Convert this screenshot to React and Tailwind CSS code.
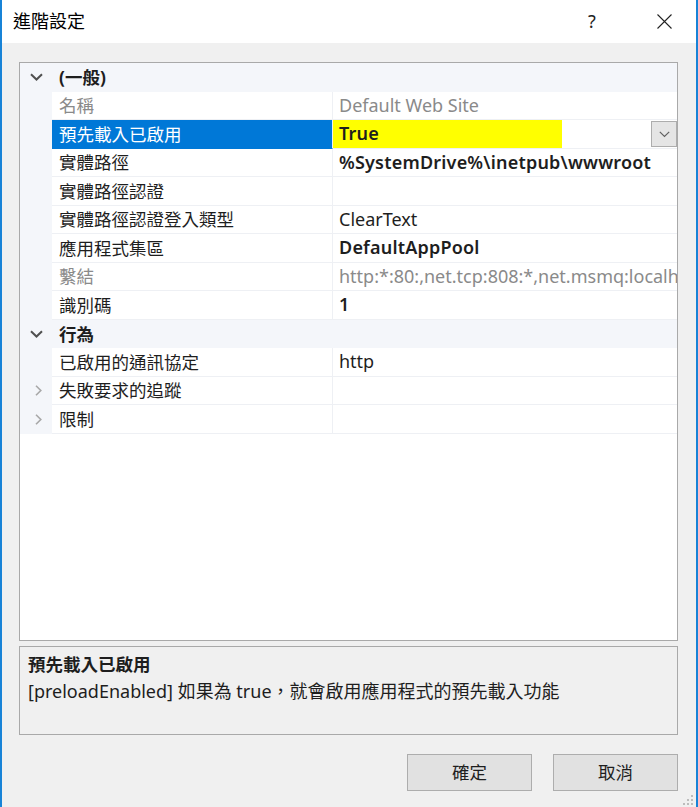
import React from "react";

const rows = [
  { cat: "(一般)" },
  { name: "名稱", value: "Default Web Site", ro: true },
  { name: "預先載入已啟用", value: "True", bold: true, selected: true, mark: true, drop: true },
  { name: "實體路徑", value: "%SystemDrive%\\inetpub\\wwwroot", bold: true },
  { name: "實體路徑認證", value: "" },
  { name: "實體路徑認證登入類型", value: "ClearText" },
  { name: "應用程式集區", value: "DefaultAppPool", bold: true },
  { name: "繫結", value: "http:*:80:,net.tcp:808:*,net.msmq:localhost,msmq.formatname:localhost", ro: true },
  { name: "識別碼", value: "1", bold: true },
  { cat: "行為" },
  { name: "已啟用的通訊協定", value: "http" },
  { name: "失敗要求的追蹤", value: "", more: true },
  { name: "限制", value: "", more: true },
];

function ChevronDown({ className }) {
  return (
    <svg width="13" height="8" viewBox="0 0 13 8" className={className}>
      <path d="M1 1.2 L6.5 6.5 L12 1.2" fill="none" stroke="currentColor" strokeWidth="2" />
    </svg>
  );
}

function ChevronRight() {
  return (
    <svg width="7" height="11" viewBox="0 0 7 11" className="text-[#a8a8a8]">
      <path d="M1 0.8 L5.8 5.5 L1 10.2" fill="none" stroke="currentColor" strokeWidth="1.6" />
    </svg>
  );
}

function GridRow({ row }) {
  if (row.cat) {
    return (
      <div className="h-[28.5px] flex items-center bg-[#f4f6fa] shrink-0">
        <div className="w-[32px] flex justify-center pl-[1px] text-[#505050]">
          <ChevronDown />
        </div>
        <div className="pl-[7px] font-bold text-[#1e1e1e]">{row.cat}</div>
      </div>
    );
  }
  return (
    <div className="h-[28.5px] flex shrink-0 relative">
      <div className="w-[32px] bg-[#f4f6fa] flex items-center justify-center pl-[4px]">
        {row.more && <ChevronRight />}
      </div>
      <div
        className={
          "w-[281px] flex items-center pl-[7px] border-r border-b border-[#eef0f4] whitespace-nowrap " +
          (row.selected ? "bg-[#0078d7] text-white border-b-[#0078d7]" : row.ro ? "text-[#8a8a8a]" : "text-[#1e1e1e]")
        }
      >
        {row.name}
      </div>
      <div className="flex-1 relative flex items-center pl-[6px] border-b border-[#eef0f4] overflow-hidden whitespace-nowrap text-[18px]">
        {row.mark && <div className="absolute left-[-1px] top-[-5px] w-[230px] h-[36px] bg-[#ffff00]" />}
        <span
          className={
            "relative " +
            (row.bold ? "font-semibold text-[#1e1e1e] tracking-[0.2px]" : row.ro ? "text-[#8a8a8a]" : "text-[#1e1e1e]")
          }
        >
          {row.value}
        </span>
        {row.drop && (
          <div className="absolute right-0 top-[1px] w-[26px] h-[26px] bg-[#e5e5e5] border border-[#adadad] flex items-center justify-center text-[#606060]">
            <svg width="11" height="7" viewBox="0 0 11 7">
              <path d="M0.8 0.8 L5.5 5.5 L10.2 0.8" fill="none" stroke="currentColor" strokeWidth="1.2" />
            </svg>
          </div>
        )}
      </div>
    </div>
  );
}

export default function App() {
  return (
    <div className="w-[698px] h-[807px] flex flex-col bg-[#f0f0f0] border-l-2 border-r-2 border-[#1883d7] text-[17.5px] text-[#1e1e1e] font-['Noto_Sans','Noto_Sans_CJK_TC',sans-serif] overflow-hidden relative">
      {/* title bar */}
      <div className="h-[43px] bg-white flex items-center shrink-0">
        <div className="pl-[11px] flex-1 text-[18px] text-black">進階設定</div>
        <div className="w-[40px] text-center text-[18px] text-[#222] mr-[32px]">?</div>
        <div className="w-[40px] flex justify-center mr-[12px]">
          <svg width="15" height="15" viewBox="0 0 15 15">
            <path d="M0.5 0.5 L14.5 14.5 M14.5 0.5 L0.5 14.5" stroke="#222" strokeWidth="1.1" />
          </svg>
        </div>
      </div>

      <div className="flex-1 flex flex-col pl-[17px] pr-[18px] pt-[19px]">
        {/* property grid */}
        <div className="h-[579px] bg-white border border-[#a9a9a9] flex flex-col overflow-hidden shrink-0">
          {rows.map((r, i) => (
            <GridRow key={i} row={r} />
          ))}
        </div>

        {/* description */}
        <div className="mt-[5px] h-[89px] border border-[#a9a9a9] pl-[8px] pt-[4px] leading-[27px] shrink-0">
          <div className="font-semibold">預先載入已啟用</div>
          <div className="text-[18px]">[preloadEnabled] 如果為 true，就會啟用應用程式的預先載入功能</div>
        </div>

        {/* buttons */}
        <div className="mt-[19px] flex justify-end gap-[21px]">
          <button className="w-[125px] h-[37px] bg-[#e1e1e1] border border-[#adadad] text-[#1e1e1e]">確定</button>
          <button className="w-[125px] h-[37px] bg-[#e1e1e1] border border-[#adadad] text-[#1e1e1e]">取消</button>
        </div>
      </div>

      {/* resize grip */}
      <svg width="12" height="12" viewBox="0 0 12 12" className="absolute right-[2px] bottom-[1px]">
        <rect x="9" y="1" width="2" height="2" fill="#bcbcbc" />
        <rect x="5" y="5" width="2" height="2" fill="#bcbcbc" />
        <rect x="9" y="5" width="2" height="2" fill="#bcbcbc" />
        <rect x="1" y="9" width="2" height="2" fill="#bcbcbc" />
        <rect x="5" y="9" width="2" height="2" fill="#bcbcbc" />
        <rect x="9" y="9" width="2" height="2" fill="#bcbcbc" />
      </svg>
    </div>
  );
}
